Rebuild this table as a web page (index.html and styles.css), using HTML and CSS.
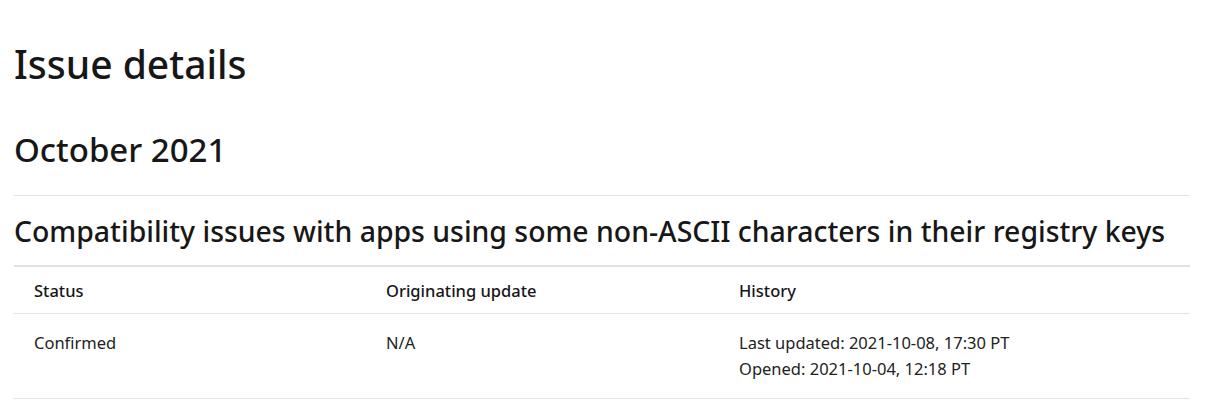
FILE: index.html
```html
<!DOCTYPE html>
<html lang="en">
<head>
<meta charset="utf-8">
<title>Issue details</title>
<link rel="stylesheet" href="styles.css">
</head>
<body>
<main class="page">
  <h1 class="page-title">Issue details</h1>
  <h2 class="month">October 2021</h2>
  <section class="issue">
    <h3 class="issue-title">Compatibility issues with apps using some non-ASCII characters in their registry keys</h3>
    <table class="issue-table">
      <colgroup>
        <col class="col-status">
        <col class="col-update">
        <col class="col-history">
      </colgroup>
      <thead>
        <tr>
          <th>Status</th>
          <th>Originating update</th>
          <th>History</th>
        </tr>
      </thead>
      <tbody>
        <tr>
          <td>Confirmed</td>
          <td>N/A</td>
          <td>Last updated: 2021-10-08, 17:30 PT<br>Opened: 2021-10-04, 12:18 PT</td>
        </tr>
      </tbody>
    </table>
  </section>
</main>
</body>
</html>
```

FILE: styles.css
```css
html, body {
  margin: 0;
  padding: 0;
  background: #ffffff;
}

body {
  font-family: "Noto Sans", "Open Sans", "Liberation Sans", sans-serif;
  color: #171717;
}

.page {
  width: 1176px;
  padding: 0 0 0 14px;
}

.page-title {
  margin: 0;
  padding-top: 34px;
  font-size: 39px;
  font-weight: 530;
  line-height: 60px;
}

.month {
  margin: 34px 0 0;
  font-size: 33px;
  font-weight: 520;
  line-height: 44px;
  padding-bottom: 23px;
  border-bottom: 1px solid #e3e3e3;
}

.issue-title {
  margin: 17px 0 0;
  font-size: 28.4px;
  font-weight: 500;
  line-height: 36px;
  padding-bottom: 16px;
  border-bottom: 2px solid #e3e3e3;
}

.issue-table {
  width: 100%;
  border-collapse: collapse;
  table-layout: fixed;
  font-size: 16.5px;
}

.col-status { width: 352px; }
.col-update { width: 353px; }

.issue-table th {
  text-align: left;
  font-weight: 550;
  padding: 13px 20px 11px;
  line-height: 22px;
  border-bottom: 1px solid #e3e3e3;
}

.issue-table td {
  vertical-align: top;
  padding: 16px 20px;
  line-height: 26px;
  border-bottom: 1px solid #e3e3e3;
  font-weight: 400;
  color: #222222;
}
```
